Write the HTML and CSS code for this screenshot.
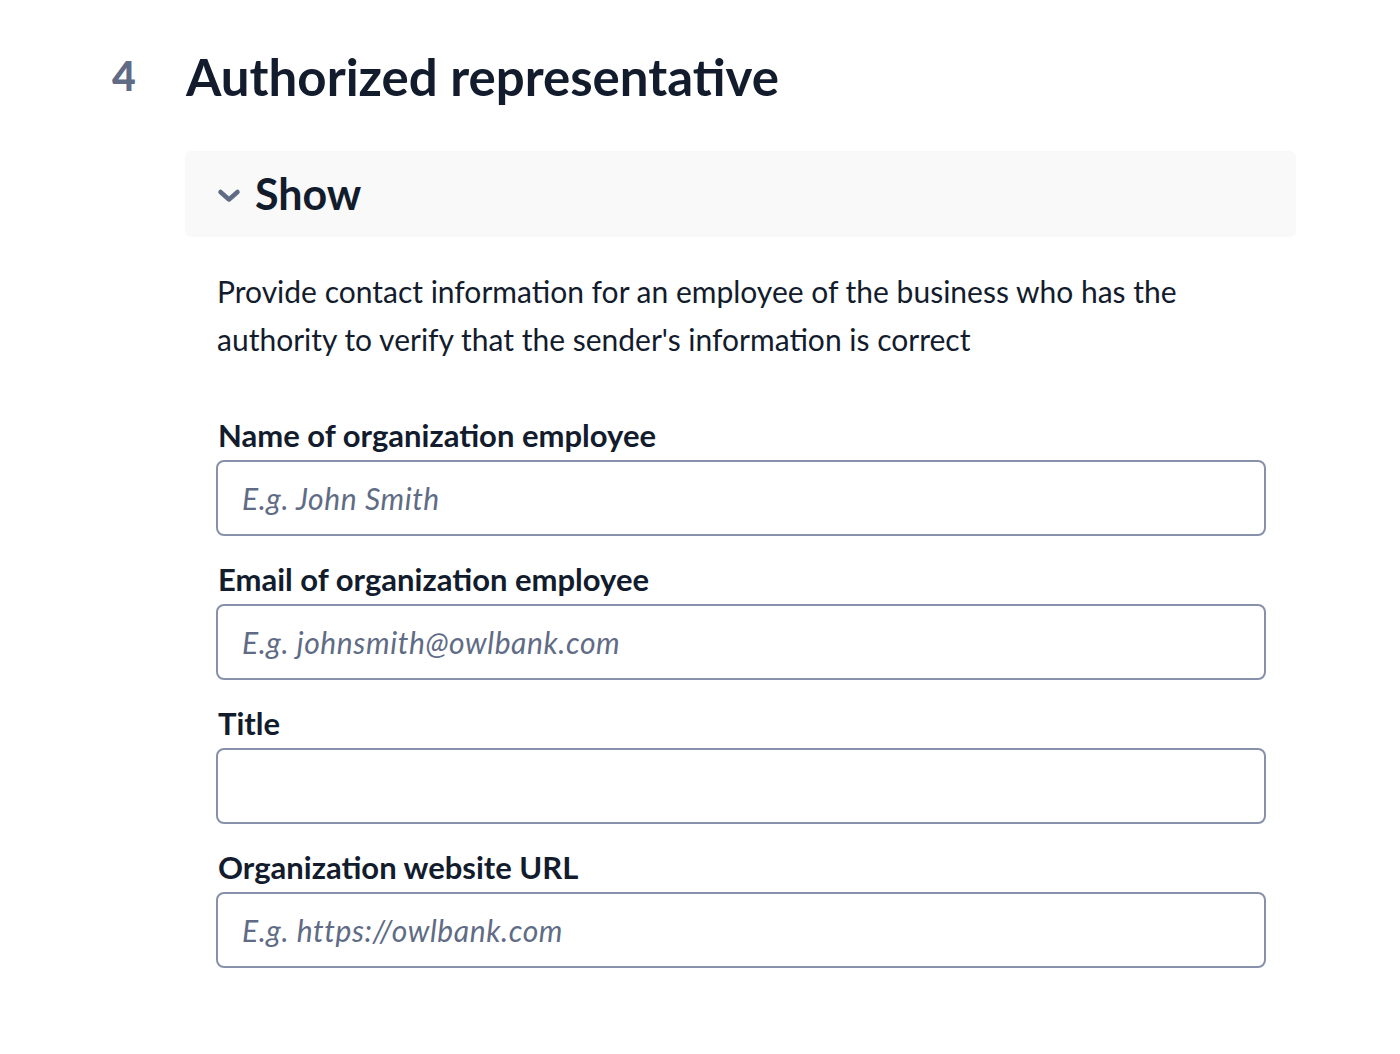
FILE: index.html
```html
<!DOCTYPE html>
<html lang="en">
<head>
<meta charset="utf-8">
<title>Authorized representative</title>
<link rel="stylesheet" href="styles.css">
</head>
<body>
<main class="page">
  <header class="step-head">
    <span class="step-number">4</span>
    <h1 class="step-title">Authorized representative</h1>
  </header>
  <section class="step-body">
    <button class="disclosure" type="button">
      <svg class="chevron" width="24" height="16" viewBox="0 0 24 16" aria-hidden="true">
        <path d="M3.5 4 L12 11.5 L20.5 4" fill="none" stroke="#606b85" stroke-width="4.5" stroke-linecap="round" stroke-linejoin="round"/>
      </svg>
      <span class="disclosure-label">Show</span>
    </button>
    <div class="panel">
      <p class="intro">Provide contact information for an employee of the business who has the authority to verify that the sender's information is correct</p>
      <div class="field">
        <label class="field-label" for="f-name">Name of organization employee</label>
        <input class="field-input" id="f-name" type="text" placeholder="E.g. John Smith">
      </div>
      <div class="field">
        <label class="field-label" for="f-email">Email of organization employee</label>
        <input class="field-input" id="f-email" type="text" placeholder="E.g. johnsmith@owlbank.com">
      </div>
      <div class="field">
        <label class="field-label" for="f-title">Title</label>
        <input class="field-input" id="f-title" type="text">
      </div>
      <div class="field">
        <label class="field-label" for="f-url">Organization website URL</label>
        <input class="field-input" id="f-url" type="text" placeholder="E.g. https://owlbank.com">
      </div>
    </div>
  </section>
</main>
</body>
</html>
```

FILE: styles.css
```css
* { box-sizing: border-box; }

body {
  margin: 0;
  background: #ffffff;
  color: #121c2d;
  font-family: "Lato", "Open Sans", sans-serif;
}

.page {
  padding: 46px 0 0 112px;
  width: 1296px;
}

.step-head {
  display: flex;
  align-items: flex-start;
}

.step-number {
  width: 74px;
  padding-top: 1px;
  font-size: 41px;
  font-weight: 900;
  line-height: 58px;
  color: #606b85;
}

.step-title {
  margin: 0;
  font-size: 51px;
  line-height: 62px;
  font-weight: 700;
  color: #121c2d;
}

.step-body {
  margin: 43px 0 0 73px;
}

.disclosure {
  display: flex;
  align-items: center;
  gap: 14px;
  width: 100%;
  height: 86px;
  padding: 0 0 0 32px;
  border: 0;
  border-radius: 6px;
  background: #f9f9fa;
  font: inherit;
  color: #121c2d;
  text-align: left;
  cursor: pointer;
}

.chevron { display: block; margin-top: 4px; }

.disclosure-label {
  font-size: 43px;
  font-weight: 700;
  line-height: 48px;
}

.panel {
  padding: 30px 30px 0 31px;
}

.intro {
  margin: 0 0 54px 1px;
  font-size: 30px;
  line-height: 48px;
  color: #121c2d;
}

.field {
  display: flex;
  flex-direction: column;
  gap: 7px;
  margin-bottom: 25px;
}

.field-label {
  padding-left: 2px;
  font-size: 31px;
  line-height: 36px;
  font-weight: 700;
  color: #121c2d;
}

.field-input {
  width: 100%;
  height: 76px;
  padding: 0 24px;
  border: 2px solid #8891aa;
  border-radius: 8px;
  background: #ffffff;
  font-family: inherit;
  font-size: 30px;
  letter-spacing: 0.6px;
  color: #121c2d;
  outline: none;
}

.field-input::placeholder {
  color: #606b85;
  font-style: italic;
  opacity: 1;
}
```
